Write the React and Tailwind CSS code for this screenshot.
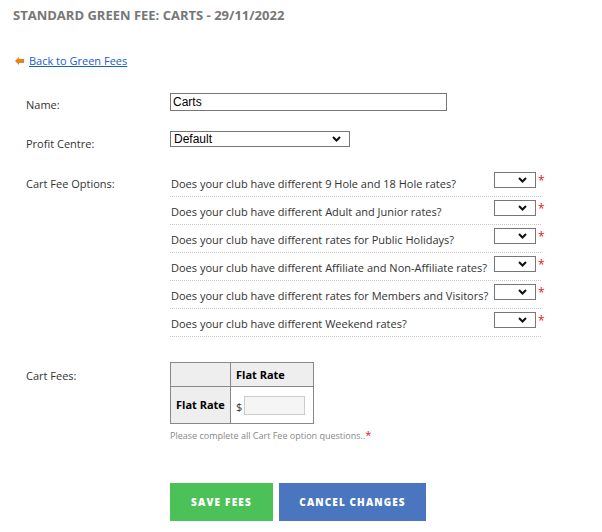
import React from "react";

function Chevron() {
  return (
    <svg width="9" height="6" viewBox="0 0 9 6" className="block">
      <path d="M1 1 L4.5 4.5 L8 1" fill="none" stroke="#111" strokeWidth="2" />
    </svg>
  );
}

function FakeSelect({ w, text }) {
  return (
    <div className={`flex h-[16px] shrink-0 items-center justify-between border border-[#767676] bg-white pl-[3px] pr-[8px] ${w}`}>
      <span className="font-['Liberation_Sans',Arial,sans-serif] text-[12px] leading-[14px] text-black">{text}</span>
      <Chevron />
    </div>
  );
}

const questions = [
  "Does your club have different 9 Hole and 18 Hole rates?",
  "Does your club have different Adult and Junior rates?",
  "Does your club have different rates for Public Holidays?",
  "Does your club have different Affiliate and Non-Affiliate rates?",
  "Does your club have different rates for Members and Visitors?",
  "Does your club have different Weekend rates?",
];

export default function App() {
  return (
    <div className="h-[532px] w-[602px] bg-white font-['Open_Sans','Noto_Sans',sans-serif] text-[11px] text-[#333]">
      <div className="pl-[13px] pt-[7px] text-[13px] font-bold leading-[16px] text-[#777]">
        STANDARD GREEN FEE: CARTS - 29/11/2022
      </div>

      <div className="mt-[30px] flex items-center pl-[15px] leading-[16px]">
        <svg width="9" height="8" viewBox="0 0 9 8" className="mr-[5px]">
          <path d="M0 4 L4 0 L4 2 L9 2 L9 6 L4 6 L4 8 Z" fill="#e8821f" />
        </svg>
        <a href="#" className="text-[#1a5dcc] underline">Back to Green Fees</a>
      </div>

      <div className="pl-[26px]">
        <div className="mt-[24px] flex">
          <div className="w-[144px] pt-[4px] leading-[16px]">Name:</div>
          <div className="flex h-[18px] w-[277px] items-center border border-[#767676] pl-[2px] font-['Liberation_Sans',Arial,sans-serif] text-[12px] text-black">
            Carts
          </div>
        </div>

        <div className="mt-[18px] flex">
          <div className="w-[144px] pt-[5px] leading-[16px]">Profit Centre:</div>
          <FakeSelect w="w-[180px]" text="Default" />
        </div>

        <div className="mt-[17px] flex">
          <div className="w-[144px] pt-[7px] leading-[16px]">Cart Fee Options:</div>
          <div className="w-[371px]">
            {questions.map((q) => (
              <div key={q} className="flex h-[28px] border-b border-dotted border-[#c8c8c8]">
                <div className="w-[324px] shrink-0 whitespace-nowrap pl-[1px] pt-[7px] leading-[16px]">{q}</div>
                <div className="mt-[3px] flex shrink-0">
                  <FakeSelect w="w-[42px]" text="" />
                  <span className="ml-[2px] mt-[1px] text-[12px] leading-[16px] text-[#e02020]">*</span>
                </div>
              </div>
            ))}
          </div>
        </div>

        <div className="mt-[25px] flex">
          <div className="w-[144px] pt-[6px] leading-[16px]">Cart Fees:</div>
          <div>
            <table className="border-collapse border border-[#888]">
              <tbody>
                <tr className="h-[24px]">
                  <td className="w-[60px] border border-[#888] bg-[#eee]"></td>
                  <td className="w-[83px] border border-[#888] bg-[#eee] pl-[5px] align-middle font-bold leading-[16px] text-black">Flat Rate</td>
                </tr>
                <tr className="h-[37px]">
                  <td className="border border-[#888] bg-[#eee] pl-[5px] align-middle font-bold leading-[16px] text-black">Flat Rate</td>
                  <td className="border border-[#888] bg-white pl-[5px] align-middle">
                    <div className="flex items-center">
                      <span className="mr-[2px] mt-[3px] leading-[16px]">$</span>
                      <div className="h-[19px] w-[61px] border border-[#ccc] bg-[#f5f5f5]"></div>
                    </div>
                  </td>
                </tr>
              </tbody>
            </table>
            <div className="mt-[5px] text-[9px] leading-[12px] text-[#888]">
              Please complete all Cart Fee option questions..<span className="text-[11px] text-[#e02020]">*</span>
            </div>
          </div>
        </div>

        <div className="ml-[144px] mt-[41px] flex gap-[6px]">
          <div className="flex h-[38px] w-[103px] items-center justify-center bg-[#4cc157] text-[10px] font-extrabold tracking-[1.2px] text-white">
            SAVE FEES
          </div>
          <div className="flex h-[38px] w-[147px] items-center justify-center bg-[#4a76c0] text-[10px] font-extrabold tracking-[1.1px] text-white">
            CANCEL CHANGES
          </div>
        </div>
      </div>
    </div>
  );
}
